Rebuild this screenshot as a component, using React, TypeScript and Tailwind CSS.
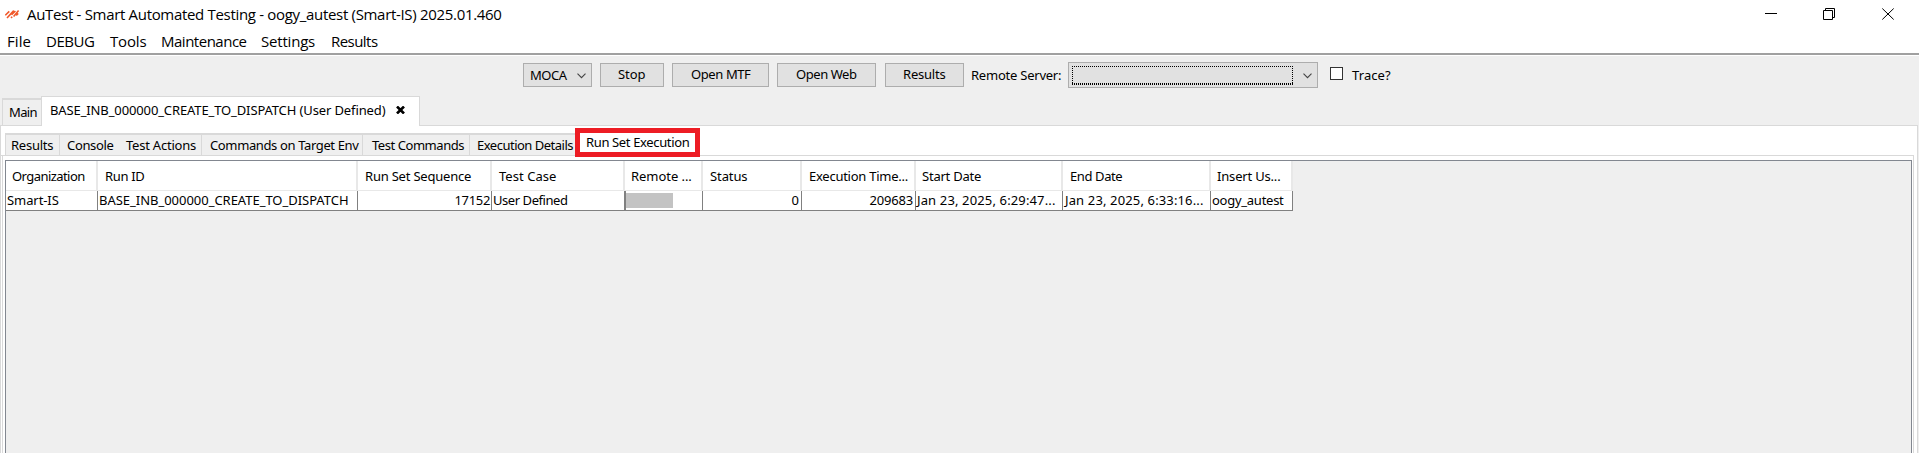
import type { ReactNode } from "react";

const text = "whitespace-nowrap font-['Noto_Sans','Liberation_Sans',sans-serif] text-[13px] leading-[18px] text-black";

function Label({ className, children }: { className: string; children: ReactNode }) {
  return <span className={`block ${text} ${className}`}>{children}</span>;
}

const menus = [
  { label: "File", cls: "w-[39px] tracking-[0.06px]" },
  { label: "DEBUG", cls: "w-[64px] tracking-[-0.45px]" },
  { label: "Tools", cls: "w-[51px] tracking-[-0.15px]" },
  { label: "Maintenance", cls: "w-[100px] tracking-[-0.49px]" },
  { label: "Settings", cls: "w-[70px] tracking-[-0.2px]" },
  { label: "Results", cls: "w-[50px] tracking-[-0.54px]" },
];

const buttons = [
  { label: "Stop", cls: "ml-2 w-[64px] pl-[17px] tracking-[-0.05px]" },
  { label: "Open MTF", cls: "ml-2 w-[97px] pl-[18px] tracking-[-0.4px]" },
  { label: "Open Web", cls: "ml-2 w-[99px] pl-[18px] tracking-[-0.45px]" },
  { label: "Results", cls: "ml-[9px] w-[79px] pl-[17px] tracking-[-0.21px]" },
];

const innerTabs = [
  { label: "Results", cls: "w-[54px] border-l pl-[5px] tracking-[-0.25px]" },
  { label: "Console", cls: "w-[67px] border-l pl-[7px] tracking-[-0.34px]" },
  { label: "Test Actions", cls: "w-[75px] pl-0 tracking-[-0.22px]" },
  { label: "Commands on Target Env", cls: "w-[161px] border-l pl-[8px] tracking-[-0.37px]" },
  { label: "Test Commands", cls: "w-[107px] border-l pl-[9px] tracking-[-0.45px]" },
  { label: "Execution Details", cls: "w-[106px] border-l pl-[7px] tracking-[-0.5px]" },
];

const columns = [
  { label: "Organization", value: "Smart-IS", w: "w-[92px]", h: "pl-[6px] tracking-[-0.56px]", v: "pl-px tracking-[-0.08px]" },
  { label: "Run ID", value: "BASE_INB_000000_CREATE_TO_DISPATCH", w: "w-[260px]", h: "pl-[7px] tracking-[-0.32px]", v: "pl-px tracking-[-0.024px]" },
  { label: "Run Set Sequence", value: "17152", w: "w-[134px]", h: "pl-[7px] tracking-[-0.21px]", v: "pr-px text-right tracking-[-0.34px]" },
  { label: "Test Case", value: "User Defined", w: "w-[133px]", h: "pl-[7px] tracking-[0.05px]", v: "pl-px tracking-[-0.44px]" },
  { label: "Remote ...", value: "", w: "w-[78px]", h: "pl-[6px] tracking-[-0.05px]", v: "" },
  { label: "Status", value: "0", w: "w-[99px]", h: "pl-[7px] tracking-[-0.1px]", v: "pr-[2px] text-right" },
  { label: "Execution Time...", value: "209683", w: "w-[114px]", h: "pl-[7px] tracking-[-0.26px]", v: "pr-[2px] text-right tracking-[-0.19px]" },
  { label: "Start Date", value: "Jan 23, 2025, 6:29:47...", w: "w-[147px]", h: "pl-[6px] tracking-[-0.22px]", v: "pl-px tracking-[0.14px]" },
  { label: "End Date", value: "Jan 23, 2025, 6:33:16...", w: "w-[148px]", h: "pl-[7px] tracking-[-0.4px]", v: "pl-[2px] tracking-[0.14px]" },
  { label: "Insert Us...", value: "oogy_autest", w: "w-[82px]", h: "pl-[6px] tracking-[-0.18px]", v: "pl-px tracking-[-0.26px]" },
];

function Chevron() {
  return (
    <svg width="9" height="6" viewBox="0 0 9 6" fill="none" stroke="#444" strokeWidth="1.1">
      <path d="M0.5 0.7 4.5 4.7 8.5 0.7" />
    </svg>
  );
}

function TitleBar() {
  return (
    <div className="flex h-[27px] items-start bg-white">
      <svg className="mt-[9px] ml-[5px]" width="15" height="10" viewBox="0 0 15 10" stroke="#f0592b" strokeWidth="1.6" fill="none">
        <path d="M0.3 6.2 4.3 2.4M2 9 8.8 1.6M6 8.9 7.2 7.7M6.6 5.8 10.4 2M8.6 7.4 13.6 1.4M11.2 6.4 13.2 4.4" />
      </svg>
      <span className="mt-1 ml-[7px] font-['Open_Sans','Liberation_Sans',sans-serif] text-[15px] leading-5 tracking-[-0.315px] whitespace-nowrap text-black">
        AuTest - Smart Automated Testing - oogy_autest (Smart-IS) 2025.01.460
      </span>
      <svg className="mt-2 ml-auto mr-[24px]" width="130" height="13" viewBox="0 0 130 13" fill="none" stroke="#000" strokeWidth="1">
        <path d="M0 5.5H12" />
        <path d="M58.5 2.5H67.5V11.5H58.5ZM60.5 2.5V0.5H69.5V9.5H67.5" />
        <path d="M117.3 0.5 128.7 11.5M128.7 0.5 117.3 11.5" />
      </svg>
    </div>
  );
}

function Toolbar() {
  return (
    <div className="flex h-10 pt-[7px] pl-[523px]">
      <div className="flex h-6 w-[69px] items-start border border-[#adadad] bg-[#e1e1e1] pt-[2px] pl-[6px]">
        <Label className="tracking-[-0.49px]">MOCA</Label>
        <span className="mt-[7px] mr-[5px] ml-auto"><Chevron /></span>
      </div>
      {buttons.map((b) => (
        <button key={b.label} className={`h-6 border border-[#adadad] bg-[#e1e1e1] pb-[2px] text-left ${text} ${b.cls}`}>
          {b.label}
        </button>
      ))}
      <Label className="mt-[3px] ml-[7px] w-[97px] tracking-[-0.23px]">Remote Server:</Label>
      <div className="-mt-px flex h-[26px] w-[250px] border border-[#adadad] bg-[#e1e1e1] p-[3px]">
        <svg width="221" height="19" viewBox="0 0 221 19" stroke="#000" strokeWidth="1" strokeDasharray="1 1" fill="none" shapeRendering="crispEdges">
          <path d="M0 0.5H221M0 18.5H221M0.5 0V19M220.5 0V19" />
          <path d="M0 17.5H221" />
        </svg>
        <span className="mt-[7px] ml-[10px]"><Chevron /></span>
      </div>
      <div className="mt-1 ml-3 h-[13px] w-[13px] border border-[#333] bg-white" />
      <Label className="mt-[3px] ml-[9px] tracking-[0.1px]">Trace?</Label>
    </div>
  );
}

function DocumentTabs() {
  return (
    <div className="flex h-[30px] w-[1918px] items-end">
      <div className="w-[2px] border-b border-[#d9d9d9]" />
      <div className="h-7 w-[39px] border-t-2 border-b border-l border-[#d9d9d9] pt-[3px] pl-[6px]">
        <Label className="tracking-[-0.62px]">Main</Label>
      </div>
      <div className="flex h-[30px] w-[379px] border-t border-r border-l border-[#d9d9d9] bg-white pt-1 pl-2">
        <Label className="tracking-[-0.12px]">BASE_INB_000000_CREATE_TO_DISPATCH (User Defined)</Label>
        <svg className="mt-[5px] ml-[11px]" width="9" height="8" viewBox="0 0 9 8" stroke="#000" strokeWidth="2.6">
          <path d="M1 0.5 8 7.5M8 0.5 1 7.5" />
        </svg>
      </div>
      <div className="flex-1 border-b border-[#d9d9d9]" />
    </div>
  );
}

function InnerTabs() {
  return (
    <div className="flex h-[30px] items-end">
      <div className="w-1 self-end border-b border-[#d9d9d9]" />
      {innerTabs.map((t) => (
        <div key={t.label} className={`h-[23px] border-t-2 border-b border-[#d9d9d9] bg-[#efefef] pt-px ${text} ${t.cls}`}>
          {t.label}
        </div>
      ))}
      <div className="relative h-[30px] w-[125px] pt-[7px] pl-[11px]">
        <Label className="tracking-[-0.36px]">Run Set Execution</Label>
        <div className="absolute top-[2px] left-0 h-[29px] w-[125px] border-5 border-[#ed1c24]" />
      </div>
      <div className="flex-1 border-b border-[#d9d9d9]" />
    </div>
  );
}

function ResultTable() {
  return (
    <div className="flex h-full flex-col border-t border-r border-l border-[#828790] bg-[#efefef]">
      <div className="flex h-[30px]">
        {columns.map((c) => (
          <div key={c.label} className={`border-r-2 border-b border-[#e8e8e8] bg-white pt-[6px] ${text} ${c.w} ${c.h}`}>
            {c.label}
          </div>
        ))}
      </div>
      <div className="flex h-5">
        {columns.map((c, i) => (
          <div key={c.label} className={`border-r border-b border-[#808080] bg-white ${i === 4 ? "border-l" : ""} ${text} ${c.w} ${c.v}`}>
            {c.value || <div className="mt-[2px] h-[15px] w-[47px] bg-[#c3c3c3]" />}
          </div>
        ))}
      </div>
    </div>
  );
}

export default function App() {
  return (
    <div className="flex h-[453px] w-[1919px] flex-col overflow-hidden bg-[#efefef]">
      <TitleBar />
      <div className="mb-px flex h-[28px] border-b-2 border-[#a0a0a0] bg-white pt-1 pl-[7px] shadow-[0_1px_0_#fff]">
        {menus.map((m) => (
          <span key={m.label} className={`font-['Open_Sans','Liberation_Sans',sans-serif] text-[15px] leading-5 text-black ${m.cls}`}>
            {m.label}
          </span>
        ))}
      </div>
      <Toolbar />
      <DocumentTabs />
      <div className="flex w-[1918px] flex-1 flex-col border-r border-l border-[#d9d9d9] bg-white pr-[3px]">
        <InnerTabs />
        <div className="ml-px flex-1 border-r border-l border-[#d9d9d9] bg-white pt-1 pr-px pl-[2px]">
          <ResultTable />
        </div>
      </div>
    </div>
  );
}
